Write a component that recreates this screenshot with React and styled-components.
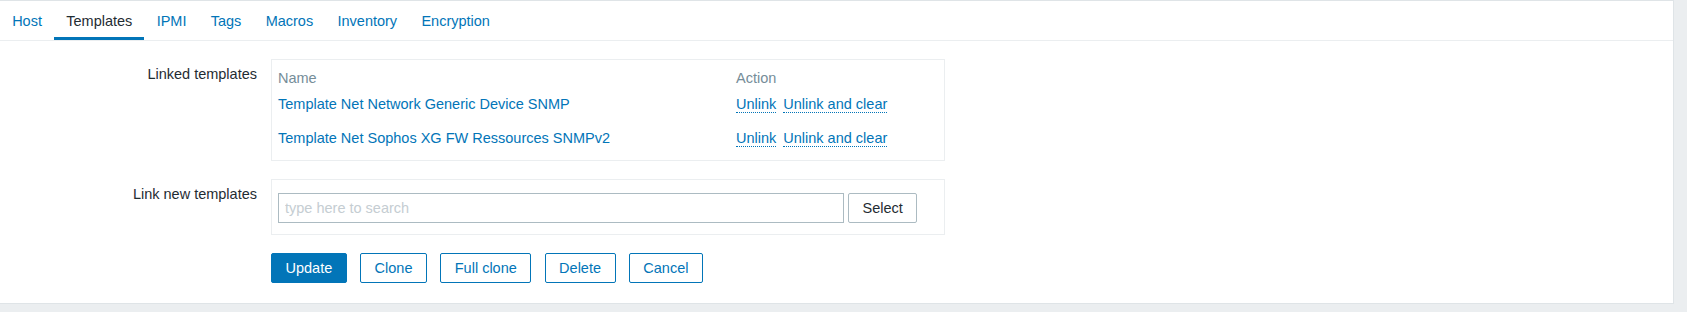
import React from 'react';
import styled, { createGlobalStyle } from 'styled-components';

const GlobalStyle = createGlobalStyle`
  html, body {
    margin: 0;
    padding: 0;
    background: #ebeef0;
    font-family: "Liberation Sans", Arial, sans-serif;
    font-size: 14.5px;
    color: #1f2c33;
  }
  * {
    box-sizing: border-box;
  }
`;

const tabs = ['Host', 'Templates', 'IPMI', 'Tags', 'Macros', 'Inventory', 'Encryption'];

const linked = [
  'Template Net Network Generic Device SNMP',
  'Template Net Sophos XG FW Ressources SNMPv2',
];

const actions = ['Update', 'Clone', 'Full clone', 'Delete', 'Cancel'];

const App = () => {
  return (
    <Page>
      <GlobalStyle />
      <Panel>
        <TabBar>
          {tabs.map((t) => (
            <Tab key={t} $active={t === 'Templates'}>{t}</Tab>
          ))}
        </TabBar>
        <Form>
          <Label>Linked templates</Label>
          <FieldBox $pad="4px 6px 4.7px">
            <LinkedTable>
              <HeadCell>Name</HeadCell>
              <HeadCell>Action</HeadCell>
              {linked.map((name) => (
                <React.Fragment key={name}>
                  <Cell><TextLink>{name}</TextLink></Cell>
                  <Cell>
                    <DottedLink>Unlink</DottedLink>
                    <DottedLink>Unlink and clear</DottedLink>
                  </Cell>
                </React.Fragment>
              ))}
            </LinkedTable>
          </FieldBox>

          <Label>Link new templates</Label>
          <FieldBox $pad="13px 6px 11px">
            <SearchRow>
              <SearchInput placeholder="type here to search" />
              <Button $variant="grey">Select</Button>
            </SearchRow>
          </FieldBox>

          <span />
          <ButtonRow>
            {actions.map((a) => (
              <Button key={a} $variant={a === 'Update' ? 'primary' : 'outline'}>{a}</Button>
            ))}
          </ButtonRow>
        </Form>
      </Panel>
    </Page>
  );
};

const Page = styled.div`
  padding: 0 13px 9px 0;
  min-height: 312px;
`;

const Panel = styled.div`
  background: #fff;
  border: 1px solid #dfe4e7;
  border-left: none;
`;

const TabBar = styled.div`
  display: flex;
  border-bottom: 1px solid #ebeef0;
`;

const Tab = styled.div`
  padding: 12px 12.15px 7px;
  line-height: 17px;
  border-bottom: 3px solid ${(p) => (p.$active ? '#0275b8' : 'transparent')};
  color: ${(p) => (p.$active ? '#1f2c33' : '#0275b8')};
  cursor: pointer;
  white-space: nowrap;
`;

const Form = styled.div`
  display: grid;
  grid-template-columns: 257px 674px;
  column-gap: 14px;
  row-gap: 18px;
  padding: 18px 0 19.5px;
  line-height: 17px;
`;

const Label = styled.div`
  text-align: right;
  padding-top: 7.4px;
  white-space: nowrap;
`;

const FieldBox = styled.div`
  border: 1px solid #ebeef0;
  padding: ${(p) => p.$pad};
`;

const LinkedTable = styled.div`
  display: grid;
  grid-template-columns: 458px auto;
`;

const HeadCell = styled.div`
  color: #768d99;
  padding: 5.7px 0 1.5px;
`;

const Cell = styled.div`
  padding: 8.3px 0;
  white-space: nowrap;
`;

const TextLink = styled.span`
  color: #0275b8;
  cursor: pointer;
`;

const DottedLink = styled.span`
  color: #0275b8;
  border-bottom: 1px dotted #0275b8;
  margin-right: 7px;
  cursor: pointer;
`;

const SearchRow = styled.div`
  display: flex;
  gap: 4px;
`;

const SearchInput = styled.input`
  width: 566px;
  height: 30px;
  border: 1px solid #acbbc2;
  padding: 0 6px;
  font: inherit;
  color: #1f2c33;
  outline: none;

  &::placeholder {
    color: #c5cdd2;
  }
`;

const ButtonRow = styled.div`
  display: flex;
  gap: 13.3px;
`;

const Button = styled.button`
  height: 30px;
  padding: 0 13.5px;
  font: inherit;
  border-radius: 2px;
  cursor: pointer;
  white-space: nowrap;
  border: 1px solid ${(p) => (p.$variant === 'grey' ? '#acbbc2' : '#0275b8')};
  background: ${(p) => (p.$variant === 'primary' ? '#0275b8' : '#fff')};
  color: ${(p) =>
    p.$variant === 'primary' ? '#fff' : p.$variant === 'grey' ? '#1f2c33' : '#0275b8'};
`;

export default App;
